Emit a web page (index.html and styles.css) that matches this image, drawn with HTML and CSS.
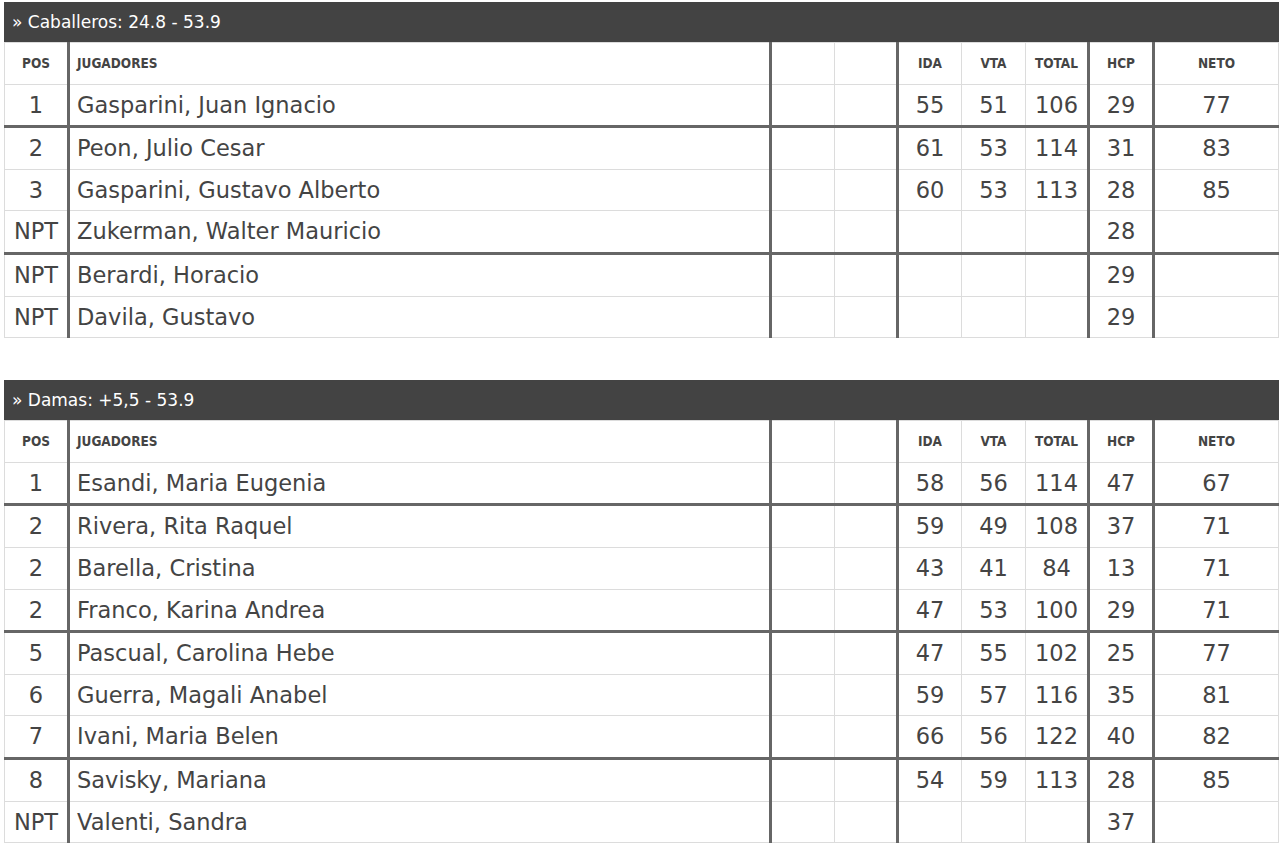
FILE: index.html
```html
<!DOCTYPE html>
<html lang="es">
<head>
<meta charset="utf-8">
<title>Resultados</title>
<link rel="stylesheet" href="styles.css">
</head>
<body>
<div class="section">
  <div class="bar">» Caballeros: 24.8 - 53.9</div>
  <table class="results">
    <colgroup>
      <col class="c-pos"><col class="c-name"><col class="c-e1"><col class="c-e2"><col class="c-ida"><col class="c-vta"><col class="c-tot"><col class="c-hcp"><col class="c-neto">
    </colgroup>
    <thead>
      <tr><th>POS</th><th class="tl tk">JUGADORES</th><th class="tk"></th><th></th><th class="tk">IDA</th><th>VTA</th><th>TOTAL</th><th class="tk">HCP</th><th class="tk">NETO</th></tr>
    </thead>
    <tbody>
      <tr><td>1</td><td class="nm tk">Gasparini, Juan Ignacio</td><td class="tk"></td><td></td><td class="tk">55</td><td>51</td><td>106</td><td class="tk">29</td><td class="tk">77</td></tr>
      <tr class="sep"><td>2</td><td class="nm tk">Peon, Julio Cesar</td><td class="tk"></td><td></td><td class="tk">61</td><td>53</td><td>114</td><td class="tk">31</td><td class="tk">83</td></tr>
      <tr><td>3</td><td class="nm tk">Gasparini, Gustavo Alberto</td><td class="tk"></td><td></td><td class="tk">60</td><td>53</td><td>113</td><td class="tk">28</td><td class="tk">85</td></tr>
      <tr><td>NPT</td><td class="nm tk">Zukerman, Walter Mauricio</td><td class="tk"></td><td></td><td class="tk"></td><td></td><td></td><td class="tk">28</td><td class="tk"></td></tr>
      <tr class="sep"><td>NPT</td><td class="nm tk">Berardi, Horacio</td><td class="tk"></td><td></td><td class="tk"></td><td></td><td></td><td class="tk">29</td><td class="tk"></td></tr>
      <tr><td>NPT</td><td class="nm tk">Davila, Gustavo</td><td class="tk"></td><td></td><td class="tk"></td><td></td><td></td><td class="tk">29</td><td class="tk"></td></tr>
    </tbody>
  </table>
</div>
<div class="section">
  <div class="bar">» Damas: +5,5 - 53.9</div>
  <table class="results">
    <colgroup>
      <col class="c-pos"><col class="c-name"><col class="c-e1"><col class="c-e2"><col class="c-ida"><col class="c-vta"><col class="c-tot"><col class="c-hcp"><col class="c-neto">
    </colgroup>
    <thead>
      <tr><th>POS</th><th class="tl tk">JUGADORES</th><th class="tk"></th><th></th><th class="tk">IDA</th><th>VTA</th><th>TOTAL</th><th class="tk">HCP</th><th class="tk">NETO</th></tr>
    </thead>
    <tbody>
      <tr><td>1</td><td class="nm tk">Esandi, Maria Eugenia</td><td class="tk"></td><td></td><td class="tk">58</td><td>56</td><td>114</td><td class="tk">47</td><td class="tk">67</td></tr>
      <tr class="sep"><td>2</td><td class="nm tk">Rivera, Rita Raquel</td><td class="tk"></td><td></td><td class="tk">59</td><td>49</td><td>108</td><td class="tk">37</td><td class="tk">71</td></tr>
      <tr><td>2</td><td class="nm tk">Barella, Cristina</td><td class="tk"></td><td></td><td class="tk">43</td><td>41</td><td>84</td><td class="tk">13</td><td class="tk">71</td></tr>
      <tr><td>2</td><td class="nm tk">Franco, Karina Andrea</td><td class="tk"></td><td></td><td class="tk">47</td><td>53</td><td>100</td><td class="tk">29</td><td class="tk">71</td></tr>
      <tr class="sep"><td>5</td><td class="nm tk">Pascual, Carolina Hebe</td><td class="tk"></td><td></td><td class="tk">47</td><td>55</td><td>102</td><td class="tk">25</td><td class="tk">77</td></tr>
      <tr><td>6</td><td class="nm tk">Guerra, Magali Anabel</td><td class="tk"></td><td></td><td class="tk">59</td><td>57</td><td>116</td><td class="tk">35</td><td class="tk">81</td></tr>
      <tr><td>7</td><td class="nm tk">Ivani, Maria Belen</td><td class="tk"></td><td></td><td class="tk">66</td><td>56</td><td>122</td><td class="tk">40</td><td class="tk">82</td></tr>
      <tr class="sep"><td>8</td><td class="nm tk">Savisky, Mariana</td><td class="tk"></td><td></td><td class="tk">54</td><td>59</td><td>113</td><td class="tk">28</td><td class="tk">85</td></tr>
      <tr><td>NPT</td><td class="nm tk">Valenti, Sandra</td><td class="tk"></td><td></td><td class="tk"></td><td></td><td></td><td class="tk">37</td><td class="tk"></td></tr>
    </tbody>
  </table>
</div>
</body>
</html>
```
FILE: styles.css
```css
html, body {
  margin: 0;
  padding: 0;
  background: #fff;
}
body {
  padding: 2px 1px 0 4px;
  font-family: "DejaVu Sans", "Open Sans", sans-serif;
  color: #444;
}
.section {
  margin-bottom: 42px;
}
.bar {
  height: 40px;
  background: #434343;
  color: #fff;
  font-size: 17px;
  line-height: 40px;
  padding-left: 8px;
  box-sizing: border-box;
}
.results {
  width: 100%;
  border-collapse: collapse;
  table-layout: fixed;
}
.c-pos { width: 64px; }
.c-name { width: 702px; }
.c-e1 { width: 64px; }
.c-e2 { width: 63px; }
.c-ida { width: 64px; }
.c-vta { width: 64px; }
.c-tot { width: 63px; }
.c-hcp { width: 65px; }
.c-neto { width: auto; }
.results th,
.results td {
  border: 1px solid #dcdcdc;
  padding: 0;
  text-align: center;
  vertical-align: middle;
  line-height: 1;
}
.results th {
  height: 40.6px;
  font-size: 13.5px;
  font-weight: 700;
  font-stretch: condensed;
  color: #444;
}
.results td {
  height: 40.6px;
  font-size: 22.5px;
  color: #444;
}
.results .tl,
.results .nm {
  text-align: left;
  padding-left: 7px;
}
.results .tk {
  border-left: 3px solid #666;
}
.results tr.sep td {
  border-top: 3px solid #666;
}
```
